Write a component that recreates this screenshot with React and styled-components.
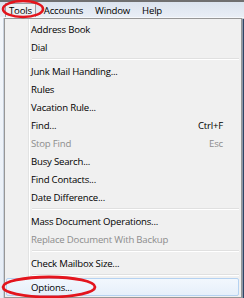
import React from "react";
import styled, { createGlobalStyle } from "styled-components";

const GlobalStyle = createGlobalStyle`
  body {
    margin: 0;
    overflow: hidden;
    background: #f0f0f0;
  }
`;

const Screen = styled.div`
  position: relative;
  width: 244px;
  height: 298px;
  overflow: hidden;
  font-family: "Open Sans", "Noto Sans", sans-serif;
  font-size: 9.6px;
  letter-spacing: -0.2px;
  color: #000;
`;

const MenuBar = styled.div`
  display: flex;
  align-items: center;
  height: 15px;
  padding-left: 5px;
  border-top: 2px solid #6f6f70;
  background: linear-gradient(#dbe3ee, #e9eef6);
  border-bottom: 1px solid #f6f8fb;
`;

const BarItem = styled.div`
  height: 13px;
  display: flex;
  align-items: center;
  padding: 0 3px;
  margin-right: 4px;
  border: 1px solid ${(p) => (p.$open ? "#9a9ea5" : "transparent")};
  border-bottom: none;
  background: ${(p) => (p.$open ? "#eef0f3" : "transparent")};
`;

const Body = styled.div`
  display: flex;
  height: 280px;
`;

const LeftStrip = styled.div`
  width: 3px;
  background: linear-gradient(#f4f7fb, #e6edf6);
  border-right: 1px solid #c9d2de;
`;

const RightStrip = styled.div`
  flex: 1;
  background: linear-gradient(90deg, #8a96a8 0, #8a96a8 1px, #2e4565 1px, #2b3f5e 4px, #d7dde6 4px, #d7dde6 5px, #34465f 5px);
  border-top: 1px solid #c7ccd4;
`;

const Menu = styled.div`
  width: 232px;
  padding: 1px 2px;
  border: 1px solid #979797;
  background:
    linear-gradient(90deg, transparent 23px, #e2e3e3 23px, #e2e3e3 24px, #ffffff 24px, #ffffff 25px, transparent 25px),
    #f0f0f0;
`;

const Item = styled.div`
  height: ${(p) => (p.$active ? "16px" : "18px")};
  display: flex;
  align-items: center;
  justify-content: space-between;
  padding: 0 16px 0 24px;
  color: ${(p) => (p.$disabled ? "#8d8d8d" : "#000")};
  border: ${(p) => (p.$active ? "1px solid #b5d2f1" : "none")};
  border-radius: 2px;
  background: ${(p) => (p.$active ? "linear-gradient(#f2f7fd, #e6effa)" : "transparent")};
  margin-left: ${(p) => (p.$active ? "-1px" : "0")};
`;

const Shortcut = styled.span`
  color: inherit;
`;

const Separator = styled.div`
  height: 6px;
  margin-left: 25px;
  background: linear-gradient(transparent 2px, #e0e0e0 2px, #e0e0e0 3px, #ffffff 3px, #ffffff 4px, transparent 4px);
`;

const Ring = styled.svg`
  position: absolute;
  pointer-events: none;
`;

const groups = [
  [{ label: "Address Book" }, { label: "Dial" }],
  [
    { label: "Junk Mail Handling..." },
    { label: "Rules" },
    { label: "Vacation Rule..." },
    { label: "Find...", key: "Ctrl+F" },
    { label: "Stop Find", key: "Esc", disabled: true },
    { label: "Busy Search..." },
    { label: "Find Contacts..." },
    { label: "Date Difference..." },
  ],
  [
    { label: "Mass Document Operations..." },
    { label: "Replace Document With Backup", disabled: true },
  ],
  [{ label: "Check Mailbox Size..." }],
  [{ label: "Options...", active: true }],
];

const App = () => {
  return (
    <Screen>
      <GlobalStyle />
      <MenuBar>
        <BarItem $open>Tools</BarItem>
        <BarItem>Accounts</BarItem>
        <BarItem>Window</BarItem>
        <BarItem>Help</BarItem>
      </MenuBar>
      <Body>
        <LeftStrip />
        <Menu>
          {groups.map((group, gi) => (
            <React.Fragment key={gi}>
              {gi > 0 && <Separator />}
              {group.map((item) => (
                <Item key={item.label} $disabled={item.disabled} $active={item.active}>
                  <span>{item.label}</span>
                  {item.key && <Shortcut>{item.key}</Shortcut>}
                </Item>
              ))}
            </React.Fragment>
          ))}
        </Menu>
        <RightStrip />
      </Body>
      <Ring width="44" height="20" style={{ left: 1, top: 0 }}>
        <ellipse cx="22" cy="9" rx="20" ry="8" fill="none" stroke="#e3151d" strokeWidth="2.6" />
      </Ring>
      <Ring width="98" height="26" style={{ left: 1, top: 275 }}>
        <ellipse cx="48" cy="12" rx="46" ry="10" fill="none" stroke="#e3151d" strokeWidth="2.8" />
      </Ring>
    </Screen>
  );
};

export default App;
